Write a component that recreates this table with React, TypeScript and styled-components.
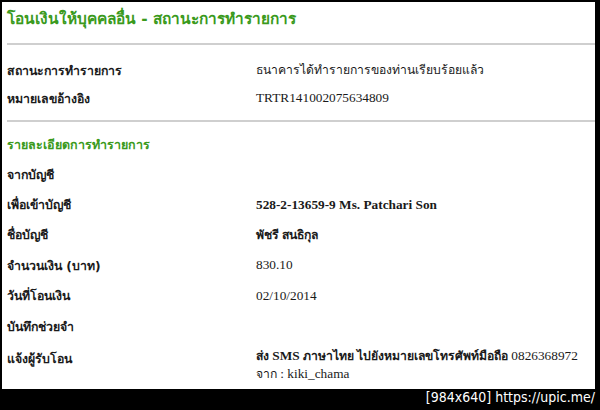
import React from "react";
import styled, { createGlobalStyle } from "styled-components";

const Global = createGlobalStyle`
  html, body { margin: 0; padding: 0; background: #000; }
  body { width: 600px; height: 410px; overflow: hidden; }
`;

const Frame = styled.div`
  width: 600px;
  height: 410px;
  background: #000;
  display: flex;
  flex-direction: column;
  box-sizing: border-box;
  padding: 2px 5px 0 2px;
`;

const Panel = styled.div`
  height: 387px;
  background: #fff;
  box-sizing: border-box;
  padding: 0 0 0 5px;
  display: flex;
  flex-direction: column;
`;

const Title = styled.h1`
  margin: 0;
  padding-top: 4px;
  height: 41px;
  box-sizing: border-box;
  font-family: Tahoma, "DejaVu Sans", "Noto Sans", sans-serif;
  font-size: 15.4px;
  font-weight: bold;
  line-height: 26px;
  color: #3a9a1c;
`;

const Rule = styled.div`
  height: 2px;
  background: #cfcfcf;
`;

const Grid = styled.div<{ $pad?: string }>`
  display: grid;
  grid-template-columns: 249px 1fr;
  padding: ${(p) => p.$pad || "0"};
`;

const Label = styled.div<{ $h?: number }>`
  font-family: Tahoma, "DejaVu Sans", "Noto Sans", sans-serif;
  font-weight: bold;
  font-size: 12.3px;
  color: #1a1a1a;
  height: ${(p) => p.$h || 30.4}px;
  display: flex;
  align-items: center;
`;

const Value = styled.div<{ $bold?: boolean; $h?: number; $top?: boolean }>`
  font-family: "Liberation Serif", "Times New Roman", serif;
  font-weight: ${(p) => (p.$bold ? "bold" : "normal")};
  font-size: 13.3px;
  color: #1a1a1a;
  height: ${(p) => p.$h || 30.4}px;
  box-sizing: border-box;
  display: flex;
  flex-direction: column;
  justify-content: ${(p) => (p.$top ? "flex-start" : "center")};
  padding-top: ${(p) => (p.$top ? "6px" : "0")};
  line-height: 18px;
  white-space: nowrap;
`;

const Thai = styled.span<{ $bold?: boolean }>`
  font-size: 12.2px;
  font-weight: ${(p) => (p.$bold ? "bold" : "inherit")};
`;

const Section = styled.div`
  font-family: Tahoma, "DejaVu Sans", "Noto Sans", sans-serif;
  font-weight: bold;
  font-size: 12.5px;
  color: #3a9a1c;
  height: 30px;
  display: flex;
  align-items: center;
  margin-top: 8px;
  margin-bottom: -1px;
`;

const Footer = styled.div`
  flex: 1;
  display: flex;
  align-items: flex-start;
  justify-content: flex-end;
  font-family: "Comic Sans MS", "DejaVu Sans Condensed", "DejaVu Sans", sans-serif;
  font-size: 14px;
  line-height: 17px;
  color: #fff;
`;

export default function App() {
  return (
    <>
      <Global />
      <Frame>
        <Panel>
          <Title>โอนเงินให้บุคคลอื่น - สถานะการทำรายการ</Title>
          <Rule />
          <Grid $pad="11px 0 8px">
            <Label $h={28}>สถานะการทำรายการ</Label>
            <Value $h={28}>
              <Thai>ธนาคารได้ทำรายการของท่านเรียบร้อยแล้ว</Thai>
            </Value>
            <Label $h={28}>หมายเลขอ้างอิง</Label>
            <Value $h={28}>TRTR141002075634809</Value>
          </Grid>
          <Rule />
          <Section>รายละเอียดการทำรายการ</Section>
          <Grid>
            <Label>จากบัญชี</Label>
            <Value></Value>
            <Label>เพื่อเข้าบัญชี</Label>
            <Value $bold>528-2-13659-9 Ms. Patchari Son</Value>
            <Label>ชื่อบัญชี</Label>
            <Value $bold>
              <Thai>พัชรี สนธิกุล</Thai>
            </Value>
            <Label>จำนวนเงิน (บาท)</Label>
            <Value>830.10</Value>
            <Label>วันที่โอนเงิน</Label>
            <Value>02/10/2014</Value>
            <Label>บันทึกช่วยจำ</Label>
            <Value></Value>
            <Label $h={34}>แจ้งผู้รับโอน</Label>
            <Value $h={46} $top>
              <div>
                <Thai $bold>ส่ง</Thai> <b>SMS</b>{" "}
                <Thai $bold>ภาษาไทย ไปยังหมายเลขโทรศัพท์มือถือ</Thai> 0826368972
              </div>
              <div>
                <Thai>จาก</Thai> : kiki_chama
              </div>
            </Value>
          </Grid>
        </Panel>
        <Footer>[984x640] https://upic.me/</Footer>
      </Frame>
    </>
  );
}
